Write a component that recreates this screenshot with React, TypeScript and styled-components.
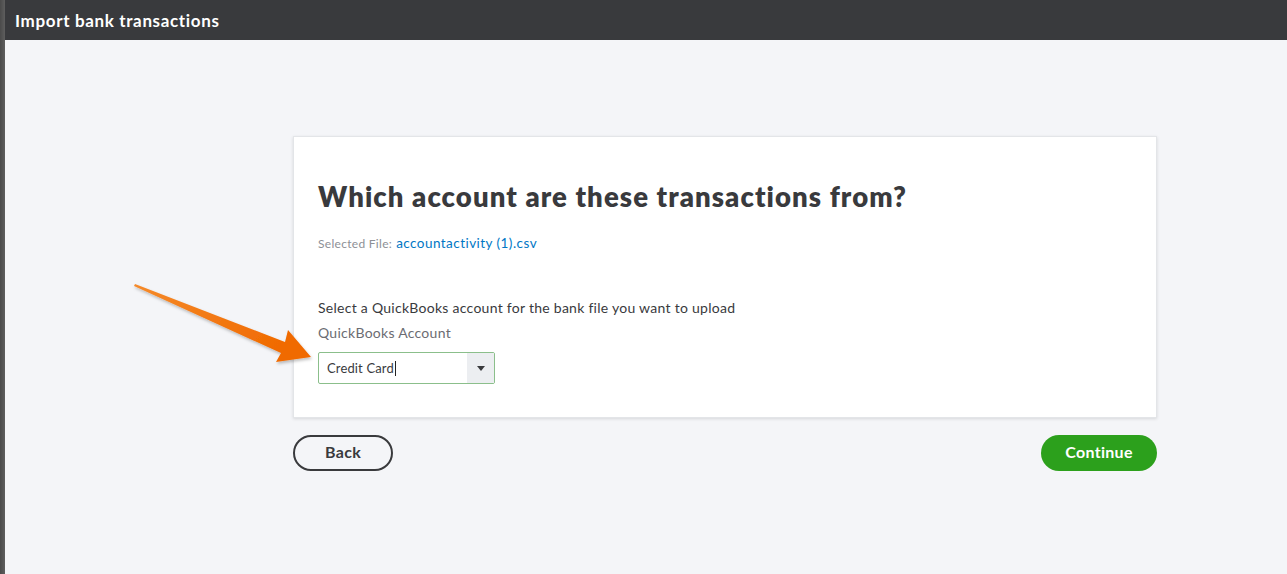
import React from "react";
import styled, { createGlobalStyle } from "styled-components";

const Global = createGlobalStyle`
  html, body { margin: 0; padding: 0; }
  body { font-family: Lato, "Open Sans", Arial, sans-serif; background: #f4f5f8; }
  #root { min-height: 574px; }
`;

const Frame = styled.div`
  display: flex;
  height: 574px;
  overflow: hidden;
`;

const Edge = styled.div`
  width: 5px;
  flex: none;
  background: linear-gradient(to right, #4a4a4a, #5e5e5e);
`;

const Page = styled.div`
  flex: 1;
  display: flex;
  flex-direction: column;
  background: #f4f5f8;
  position: relative;
`;

const Header = styled.header`
  height: 40px;
  background: #393a3d;
  display: flex;
  align-items: center;
  padding-left: 10px;
`;

const Title = styled.h1`
  margin: 0;
  color: #fff;
  font-size: 17px;
  font-weight: 700;
  letter-spacing: 0.65px;
`;

const Main = styled.main`
  padding: 96px 130px 0 288px;
  display: flex;
  flex-direction: column;
  gap: 17px;
`;

const Card = styled.section`
  background: #fff;
  border: 1px solid #e3e5e8;
  box-shadow: 0 1px 3px rgba(0, 0, 0, 0.12);
  height: 282px;
  box-sizing: border-box;
  padding: 42px 24px 0;
  display: flex;
  flex-direction: column;
`;

const Heading = styled.h2`
  margin: 0;
  font-size: 27.5px;
  font-weight: 800;
  color: #393a3d;
  line-height: 36px;
  letter-spacing: 1.1px;
`;

const FileLine = styled.div`
  margin-top: 20px;
  font-size: 12px;
  color: #8d9096;
  display: flex;
  align-items: baseline;
  gap: 4px;
  letter-spacing: 0.3px;
`;

const FileLink = styled.a`
  color: #0077c5;
  font-size: 13.5px;
  letter-spacing: 0.45px;
  text-decoration: none;
`;

const Instruction = styled.p`
  margin: 48px 0 0;
  font-size: 14px;
  color: #393a3d;
  letter-spacing: 0.27px;
`;

const Label = styled.label`
  margin-top: 8px;
  font-size: 14px;
  color: #6b6c72;
  letter-spacing: 0.27px;
`;

const Select = styled.div`
  margin-top: 11px;
  width: 177px;
  height: 32px;
  box-sizing: border-box;
  border: 1px solid #8bbf8b;
  border-radius: 2px;
  display: flex;
  align-items: stretch;
  background: #fff;
`;

const SelectText = styled.div`
  flex: 1;
  display: flex;
  align-items: center;
  padding-left: 8px;
  font-size: 13px;
  color: #393a3d;
  letter-spacing: 0.15px;
`;

const Caret = styled.span`
  display: inline-block;
  width: 1px;
  height: 15px;
  background: #222;
  margin-left: 1px;
`;

const DropButton = styled.div`
  width: 27px;
  background: #eceef1;
  display: flex;
  align-items: center;
  justify-content: center;
`;

const Triangle = styled.span`
  width: 0;
  height: 0;
  border-left: 4px solid transparent;
  border-right: 4px solid transparent;
  border-top: 5px solid #393a3d;
`;

const Actions = styled.div`
  display: flex;
  justify-content: space-between;
`;

const Button = styled.button<{ $primary?: boolean }>`
  height: 36px;
  box-sizing: border-box;
  border-radius: 18px;
  font-family: inherit;
  font-size: 16px;
  font-weight: 700;
  letter-spacing: 0.3px;
  cursor: pointer;
  padding: 0 0 3px;
  width: ${(p) => (p.$primary ? "116px" : "100px")};
  border: ${(p) => (p.$primary ? "none" : "2px solid #393a3d")};
  background: ${(p) => (p.$primary ? "#2ca01c" : "transparent")};
  color: ${(p) => (p.$primary ? "#fff" : "#393a3d")};
`;

const ArrowOverlay = styled.svg`
  position: absolute;
  left: -5px;
  top: 0;
  pointer-events: none;
`;

export default function App() {
  return (
    <>
      <Global />
      <Frame>
        <Edge />
        <Page>
          <Header>
            <Title>Import bank transactions</Title>
          </Header>
          <Main>
            <Card>
              <Heading>Which account are these transactions from?</Heading>
              <FileLine>
                Selected File: <FileLink href="#">accountactivity (1).csv</FileLink>
              </FileLine>
              <Instruction>Select a QuickBooks account for the bank file you want to upload</Instruction>
              <Label>QuickBooks Account</Label>
              <Select>
                <SelectText>
                  Credit Card
                  <Caret />
                </SelectText>
                <DropButton>
                  <Triangle />
                </DropButton>
              </Select>
            </Card>
            <Actions>
              <Button>Back</Button>
              <Button $primary>Continue</Button>
            </Actions>
          </Main>
          <ArrowOverlay width="400" height="400" viewBox="0 0 400 400">
            <defs>
              <linearGradient id="ag" x1="0" y1="0" x2="1" y2="0.4">
                <stop offset="0" stopColor="#f58a2a" />
                <stop offset="1" stopColor="#f06a00" />
              </linearGradient>
              <filter id="sh" x="-10%" y="-10%" width="130%" height="130%">
                <feDropShadow dx="1" dy="2" stdDeviation="1.5" floodColor="#000" floodOpacity="0.25" />
              </filter>
            </defs>
            <polygon
              points="135,284 285,342 288,330 311,357 276,362 281,353 134,286"
              fill="url(#ag)"
              filter="url(#sh)"
              strokeLinejoin="round"
            />
          </ArrowOverlay>
        </Page>
      </Frame>
    </>
  );
}
